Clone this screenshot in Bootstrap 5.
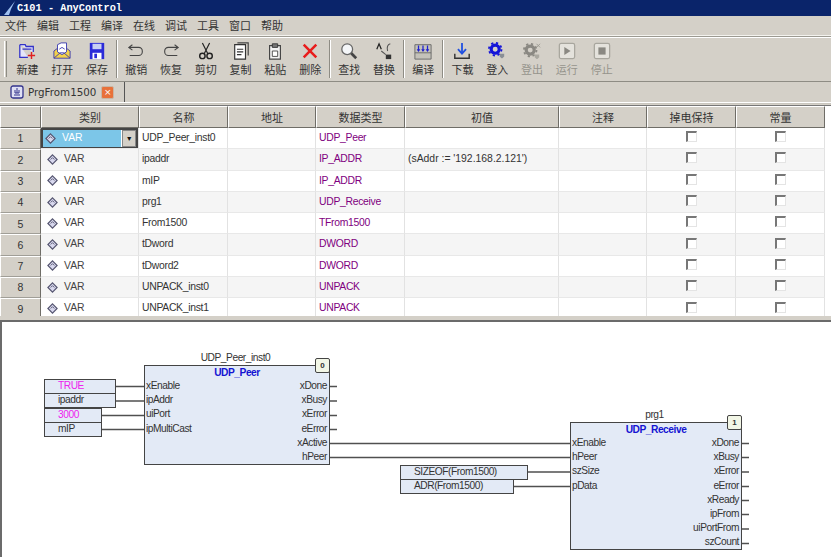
<!DOCTYPE html>
<html lang="zh">
<head>
  <meta charset="UTF-8" />
  <title>C101 - AnyControl</title>
  <link href="https://cdn.jsdelivr.net/npm/bootstrap@5.3.0/dist/css/bootstrap.min.css" rel="stylesheet" />
  <style>
    html, body { height: 557px; overflow: hidden; }
    body { background: #d4d0c8; color: #333; font-family: "Liberation Sans", "Noto Sans CJK SC", sans-serif; font-size: 11px; line-height: 1; }
    .win-title { height: 16px; background: #0a246a; color: #fff; font: bold 10.3px "Liberation Mono", monospace; padding-left: 4px; gap: 1px; }
    .win-menu { height: 20px; padding-left: 5px; gap: 10px; font-family: "Noto Sans CJK SC", sans-serif; font-size: 11px; border-bottom: 1px solid #f4f3ef; }
    .win-tools { height: 46px; border-top: 1px solid #9c9a92; border-bottom: 1px solid #8e8c84; box-shadow: inset 0 1px 0 #fff; padding-left: 4px; }
    .grip { width: 3px; height: 36px; margin-right: 3px; border-left: 1px solid #fff; border-right: 1px solid #8e8c84; }
    .tb-sep { width: 2px; height: 38px; margin: 0 1.2px; border-left: 1px solid #8e8c84; border-right: 1px solid #fff; }
    .tb-item { width: 34.8px; height: 38px; font-family: "Noto Sans CJK SC", sans-serif; font-size: 11px; color: #333; }
    .tb-item svg { display: block; width: 18px; height: 18px; margin: 2px 0 4px; }
    .tb-off { color: #96948c; }
    .win-tabs { height: 21px; border-bottom: 1px solid #fff; box-shadow: 0 1px 0 #c9c6be; }
    .doc-tab { width: 125px; height: 20px; padding-left: 10px; gap: 4px; border-right: 1px solid #555; font: 10.3px "DejaVu Sans", sans-serif; }
    .tab-x { width: 13px; height: 13px; background: #e8713a; color: #fff; border: 1px solid #c9b7a5; border-radius: 2px; font-size: 9px; margin-left: 1px; }
    .var-wrap { height: 211px; margin-top: 2px; border-top: 1px solid #777; background: #fff; overflow: hidden; }
    .var-table { table-layout: fixed; width: 825px; border-collapse: separate; border-spacing: 0; margin: 0; }
    .var-table th, .var-table td { padding: 0 0 0 3px; height: 21.3px; font-weight: 400; font-size: 10.4px; letter-spacing: -0.3px; color: #333; vertical-align: middle; white-space: nowrap; overflow: hidden; border: 0; border-right: 1px solid #e2e2e2; border-bottom: 1px solid #e8e8e8; }
    .var-table th { background: #d4d0c8; text-align: center; padding: 0; height: 22px; letter-spacing: 0; font-family: "Noto Sans CJK SC", sans-serif; font-size: 11px; border-top: 1px solid #fff; border-left: 1px solid #fff; border-right: 1px solid #6f6d67; border-bottom: 1px solid #6f6d67; }
    .var-table tbody th { font-family: "Liberation Sans", sans-serif; font-size: 10.5px; height: 21.3px; border-right: 1px solid #6f6d67; border-bottom: 1px solid #a09e97; }
    .var-table tbody tr:nth-child(even) td { background: #f5f5f5; }
    .c-no { width: 41px; } .c-cat { width: 98px; } .c-name { width: 89px; } .c-addr { width: 88px; } .c-type { width: 89px; }
    .c-init { width: 154px; } .c-note { width: 88px; } .c-ret { width: 89px; } .c-const { width: 89px; }
    .var-table td.dtype { color: #800080; }
    .var-table td.init-val { letter-spacing: 0; }
    .var-table td.chk-cell { padding: 0; }
    .var-cat { gap: 6px; padding-left: 3px; color: #444; letter-spacing: 0; }
    .var-cat svg { width: 11px; height: 11px; flex: none; }
    .var-table td.cell-sel { padding: 0; }
    .cat-edit { height: 20px; border: 2px solid #444; border-bottom-width: 1px; background: #fff; }
    .cat-fill { background: #7cc6e8; color: #fff; height: 100%; gap: 6px; padding-left: 2px; flex: 1; letter-spacing: 0; }
    .cat-fill svg { width: 11px; height: 11px; }
    .cat-btn { width: 14px; background: #d4d0c8; border: 1px solid #888; font-size: 7px; margin-left: 1px; color: #111; }
    .chk { display: block; width: 11px; height: 11px; margin: 0 auto 3px; border-top: 2px solid #777; border-left: 2px solid #777; border-right: 1px solid #e4e4e4; border-bottom: 1px solid #e4e4e4; background: #fff; }
    .splitter { height: 6px; background: #d4d0c8; border-bottom: 2px solid #6b6b6b; }
    .fbd { height: 235px; background: #fff; border-left: 2px solid #6b6b6b; overflow: hidden; color: #333; font-size: 10.2px; letter-spacing: -0.45px; }
    .wires { position: absolute; left: -2px; top: -322px; width: 831px; height: 557px; }
    .pou { position: absolute; background: #e3eaf6; border: 1px solid #444; }
    .pou-type { color: #1414d2; font-weight: 700; text-align: center; height: 13px; line-height: 13px; }
    .pou-cap { position: absolute; top: -13px; left: 0; right: 3px; text-align: center; }
    .pou-no { position: absolute; top: -8px; right: -1px; width: 15px; height: 15px; background: #f2f6e6; border: 1px solid #444; border-radius: 2px; font-size: 8px; font-weight: 700; letter-spacing: 0; }
    .pin-col span { height: 14.2px; line-height: 14px; padding: 0 2px 0 1px; }
    .arg { position: absolute; height: 15px; background: #e3eaf6; border: 1px solid #444; line-height: 12px; padding-left: 13px; }
    .arg-lit { color: #ee22ee; }
    .pou-peer { left: 142px; top: 43px; width: 186px; height: 100px; }
    .pou-recv { left: 568px; top: 100px; width: 172px; height: 128px; }
    .a-true { left: 42px; top: 57px; width: 72px; }
    .a-ip { left: 42px; top: 71px; width: 72px; }
    .a-port { left: 42px; top: 86px; width: 58px; }
    .a-mip { left: 42px; top: 100px; width: 58px; }
    .a-size { left: 398px; top: 143px; width: 128px; }
    .a-adr { left: 398px; top: 157px; width: 114px; }
  </style>
</head>
<body>
  <div class="win-title d-flex align-items-center">
    <svg width="12" height="15" viewBox="0 0 12 15"><path d="M11 0 0 14h5l2-6z" fill="#9fc0f0"/></svg>
    <span>C101 - AnyControl</span>
  </div>
  <div class="win-menu d-flex align-items-center">
    <span>文件</span><span>编辑</span><span>工程</span><span>编译</span><span>在线</span><span>调试</span><span>工具</span><span>窗口</span><span>帮助</span>
  </div>
  <div class="win-tools d-flex align-items-center">
    <div class="grip"></div>
    <div class="tb-item d-flex flex-column align-items-center">
      <svg viewBox="0 0 20 20"><path d="M2 3h6l1 2h8v6M2 3v14h9M5 8h10" fill="#e4e6fa" stroke="#3232c8" stroke-width="1.4"/><path d="M15 11v8M11 15h8" stroke="#e02020" stroke-width="1.6"/></svg>
      <span>新建</span>
    </div>
    <div class="tb-item d-flex flex-column align-items-center">
      <svg viewBox="0 0 20 20"><path d="M1 10l4-3h10l4 3v8H1z" fill="#f3d24a" stroke="#3a3ab0"/><path d="M5 11V3l4-2h6v10l-5 3z" fill="#fff" stroke="#3a3ab0"/><path d="M7 8l3-2 3 2" fill="none" stroke="#3a3ab0"/><path d="M1 18l7-6h4l7 6" fill="none" stroke="#3a3ab0"/></svg>
      <span>打开</span>
    </div>
    <div class="tb-item d-flex flex-column align-items-center">
      <svg viewBox="0 0 20 20"><path d="M2 1h16v18H2z" fill="#2b2bd8"/><path d="M5 2h10v6H5z" fill="#c8d0f4"/><path d="M5 12h10v7H5z" fill="#fff"/><path d="M7 13h3v5H7z" fill="#2b2bd8"/></svg>
      <span>保存</span>
    </div>
    <div class="tb-sep"></div>
    <div class="tb-item d-flex flex-column align-items-center">
      <svg viewBox="0 0 20 20"><path d="M6 3 2 6l4 3M2 6h11a4 4 0 0 1 4 4v1a4 4 0 0 1-4 4H3" fill="none" stroke="#444" stroke-width="1.2"/></svg>
      <span>撤销</span>
    </div>
    <div class="tb-item d-flex flex-column align-items-center">
      <svg viewBox="0 0 20 20"><path d="M14 3l4 3-4 3M18 6H7a4 4 0 0 0-4 4v1a4 4 0 0 0 4 4h10" fill="none" stroke="#444" stroke-width="1.2"/></svg>
      <span>恢复</span>
    </div>
    <div class="tb-item d-flex flex-column align-items-center">
      <svg viewBox="0 0 20 20"><path d="M6 1l6 12M14 1 8 13" fill="none" stroke="#222" stroke-width="1.3"/><circle cx="6" cy="15.500" r="3" fill="none" stroke="#222" stroke-width="1.6"/><circle cx="14" cy="15.500" r="3" fill="none" stroke="#222" stroke-width="1.6"/></svg>
      <span>剪切</span>
    </div>
    <div class="tb-item d-flex flex-column align-items-center">
      <svg viewBox="0 0 20 20"><path d="M6 1h12v14" fill="none" stroke="#444" stroke-width="1.3"/><path d="M3 3h12v16H3z" fill="#fff" stroke="#333" stroke-width="1.3"/><path d="M5.500 8h7M5.500 11h7M5.500 14h5" stroke="#333" stroke-width="1.200"/></svg>
      <span>复制</span>
    </div>
    <div class="tb-item d-flex flex-column align-items-center">
      <svg viewBox="0 0 20 20"><path d="M4 4h12v15H4z" fill="#f4f4f4" stroke="#444" stroke-width="1.3"/><path d="M7 2h6v4H7z" fill="#777" stroke="#333"/><path d="M7 10h6v6H7z" fill="#fff" stroke="#444"/></svg>
      <span>粘贴</span>
    </div>
    <div class="tb-item d-flex flex-column align-items-center">
      <svg viewBox="0 0 20 20"><path d="M3 3l14 14M17 3 3 17" stroke="#e81c1c" stroke-width="2.800"/></svg>
      <span>删除</span>
    </div>
    <div class="tb-sep"></div>
    <div class="tb-item d-flex flex-column align-items-center">
      <svg viewBox="0 0 20 20"><circle cx="8" cy="8" r="6" fill="#f4f6f8" stroke="#666" stroke-width="1.4"/><path d="M12.500 12.500 18 18" stroke="#444" stroke-width="3"/></svg>
      <span>查找</span>
    </div>
    <div class="tb-item d-flex flex-column align-items-center">
      <svg viewBox="0 0 20 20"><path d="M2 8 4.500 2 7 8" fill="none" stroke="#222" stroke-width="1.4"/><path d="M7 10l5 4M17 2c-3 1-4 4-3 8" fill="none" stroke="#555" stroke-width="1.2"/><path d="M12 14h6v5h-6z" fill="#333"/></svg>
      <span>替换</span>
    </div>
    <div class="tb-sep"></div>
    <div class="tb-item d-flex flex-column align-items-center">
      <svg viewBox="0 0 20 20"><path d="M1 3h18v16H1z" fill="#c4c2ba" stroke="#666"/><path d="M1 12h18" stroke="#666"/><path d="M5 4v6M10 4v6M15 4v6" stroke="#2222d0" stroke-width="1.4"/><path d="M3 8l2 3 2-3zM8 8l2 3 2-3zM13 8l2 3 2-3z" fill="#2222d0"/></svg>
      <span>编译</span>
    </div>
    <div class="tb-sep"></div>
    <div class="tb-item d-flex flex-column align-items-center">
      <svg viewBox="0 0 20 20"><path d="M10 1v11" stroke="#2050e0" stroke-width="2"/><path d="M5.500 8l4.500 5 4.500-5" fill="none" stroke="#2050e0" stroke-width="2"/><path d="M2 13v5h16v-5" fill="none" stroke="#333" stroke-width="1.6"/></svg>
      <span>下载</span>
    </div>
    <div class="tb-item d-flex flex-column align-items-center">
      <svg viewBox="0 0 20 20"><circle cx="8" cy="8" r="4.500" fill="none" stroke="#1414d8" stroke-width="3.500"/><circle cx="8" cy="8" r="7" fill="none" stroke="#1414d8" stroke-width="2" stroke-dasharray="2.500 3"/><path d="M13 13h5v3l-2 2h-1l-2-2z" fill="#8a8f96"/></svg>
      <span>登入</span>
    </div>
    <div class="tb-item tb-off d-flex flex-column align-items-center">
      <svg viewBox="0 0 20 20"><circle cx="8" cy="9" r="4.500" fill="none" stroke="#8a8882" stroke-width="3.500"/><circle cx="8" cy="9" r="7" fill="none" stroke="#8a8882" stroke-width="2" stroke-dasharray="2.500 3"/><path d="M15 2l4 4M19 2l-4 4" stroke="#9a9890"/><path d="M13 14h5v3l-2 2h-1l-2-2z" fill="#aaa8a0"/></svg>
      <span>登出</span>
    </div>
    <div class="tb-item tb-off d-flex flex-column align-items-center">
      <svg viewBox="0 0 20 20"><rect x="1.500" y="1.500" width="17" height="17" rx="2" fill="#e4e2dc" stroke="#a8a69e" stroke-width="1.400"/><path d="M7 5.500v9l7-4.500z" fill="#8a8882"/></svg>
      <span>运行</span>
    </div>
    <div class="tb-item tb-off d-flex flex-column align-items-center">
      <svg viewBox="0 0 20 20"><rect x="1.500" y="1.500" width="17" height="17" rx="2" fill="#e4e2dc" stroke="#a8a69e" stroke-width="1.400"/><rect x="6" y="6" width="8" height="8" fill="#8a8882"/></svg>
      <span>停止</span>
    </div>
  </div>
  <div class="win-tabs d-flex">
    <div class="doc-tab d-flex align-items-center">
      <svg width="14" height="14" viewBox="0 0 14 14"><rect x="1" y="1" width="12" height="12" rx="2" fill="#dfe0f4" stroke="#33338c" stroke-width="1.300"/><path d="M4 10h6M7 3v5M5 5v3h4V5" fill="none" stroke="#33338c"/></svg>
      <span>PrgFrom1500</span>
      <span class="tab-x d-flex align-items-center justify-content-center">×</span>
    </div>
  </div>

  <div class="var-wrap">
    <table class="table var-table">
      <colgroup>
        <col class="c-no"><col class="c-cat"><col class="c-name"><col class="c-addr"><col class="c-type"><col class="c-init"><col class="c-note"><col class="c-ret"><col class="c-const">
      </colgroup>
      <thead>
        <tr><th></th><th>类别</th><th>名称</th><th>地址</th><th>数据类型</th><th>初值</th><th>注释</th><th>掉电保持</th><th>常量</th></tr>
      </thead>
      <tbody id="varRows"></tbody>
    </table>
  </div>
  <div class="splitter"></div>

  <div class="fbd position-relative">
    <svg class="wires" viewBox="0 0 831 557">
      <g stroke="#505050" stroke-width="1.400" fill="none">
        <path d="M116 386.500h28M116 401h28M101 415.500h43M101 429.500h43"/>
        <path d="M329 443.500h241M329 457.500h241"/>
        <path d="M527 472h43M513 486.500h57"/>
        <path d="M329 386.500h8M329 401h8M329 415.500h8M329 429.500h8"/>
        <path d="M741 443.500h8M741 457.500h8M741 472h8M741 486.500h8M741 500.500h8M741 514.500h8M741 529h8M741 543.500h8"/>
      </g>
    </svg>

    <div class="arg arg-lit a-true">TRUE</div>
    <div class="arg a-ip">ipaddr</div>
    <div class="arg arg-lit a-port">3000</div>
    <div class="arg a-mip">mIP</div>
    <div class="arg a-size">SIZEOF(From1500)</div>
    <div class="arg a-adr">ADR(From1500)</div>

    <div class="pou pou-peer">
      <div class="pou-cap">UDP_Peer_inst0</div>
      <div class="pou-no d-flex align-items-center justify-content-center">0</div>
      <div class="pou-type">UDP_Peer</div>
      <div class="d-flex justify-content-between">
        <div class="pin-col d-flex flex-column"><span>xEnable</span><span>ipAddr</span><span>uiPort</span><span>ipMultiCast</span></div>
        <div class="pin-col d-flex flex-column text-end"><span>xDone</span><span>xBusy</span><span>xError</span><span>eError</span><span>xActive</span><span>hPeer</span></div>
      </div>
    </div>

    <div class="pou pou-recv">
      <div class="pou-cap">prg1</div>
      <div class="pou-no d-flex align-items-center justify-content-center">1</div>
      <div class="pou-type">UDP_Receive</div>
      <div class="d-flex justify-content-between">
        <div class="pin-col d-flex flex-column"><span>xEnable</span><span>hPeer</span><span>szSize</span><span>pData</span></div>
        <div class="pin-col d-flex flex-column text-end"><span>xDone</span><span>xBusy</span><span>xError</span><span>eError</span><span>xReady</span><span>ipFrom</span><span>uiPortFrom</span><span>szCount</span></div>
      </div>
    </div>
  </div>

<script>
  var diamond = '<svg viewBox="0 0 12 12"><path d="M6 1l5 5-5 5-5-5z" fill="#d8d8ee" stroke="#555570" stroke-width="1.300"/><path d="M4 6l2-2 2 2" fill="none" stroke="#555570"/></svg>';
  var rows = [
    ['UDP_Peer_inst0', 'UDP_Peer', ''],
    ['ipaddr', 'IP_ADDR', "(sAddr := '192.168.2.121')"],
    ['mIP', 'IP_ADDR', ''],
    ['prg1', 'UDP_Receive', ''],
    ['From1500', 'TFrom1500', ''],
    ['tDword', 'DWORD', ''],
    ['tDword2', 'DWORD', ''],
    ['UNPACK_inst0', 'UNPACK', ''],
    ['UNPACK_inst1', 'UNPACK', '']
  ];
  document.getElementById('varRows').innerHTML = rows.map(function (r, i) {
    var cat = i === 0
      ? '<td class="cell-sel"><div class="cat-edit d-flex"><div class="cat-fill d-flex align-items-center">' + diamond + '<span>VAR</span></div><div class="cat-btn d-flex align-items-center justify-content-center">▼</div></div></td>'
      : '<td><div class="var-cat d-flex align-items-center">' + diamond + '<span>VAR</span></div></td>';
    return '<tr><th>' + (i + 1) + '</th>' + cat + '<td>' + r[0] + '</td><td></td><td class="dtype">' + r[1] + '</td><td class="init-val">' + r[2] +
      '</td><td></td><td class="chk-cell"><span class="chk"></span></td><td class="chk-cell"><span class="chk"></span></td></tr>';
  }).join('');
</script>
<script src="https://cdn.jsdelivr.net/npm/bootstrap@5.3.0/dist/js/bootstrap.bundle.min.js"></script>
</body>
</html>
